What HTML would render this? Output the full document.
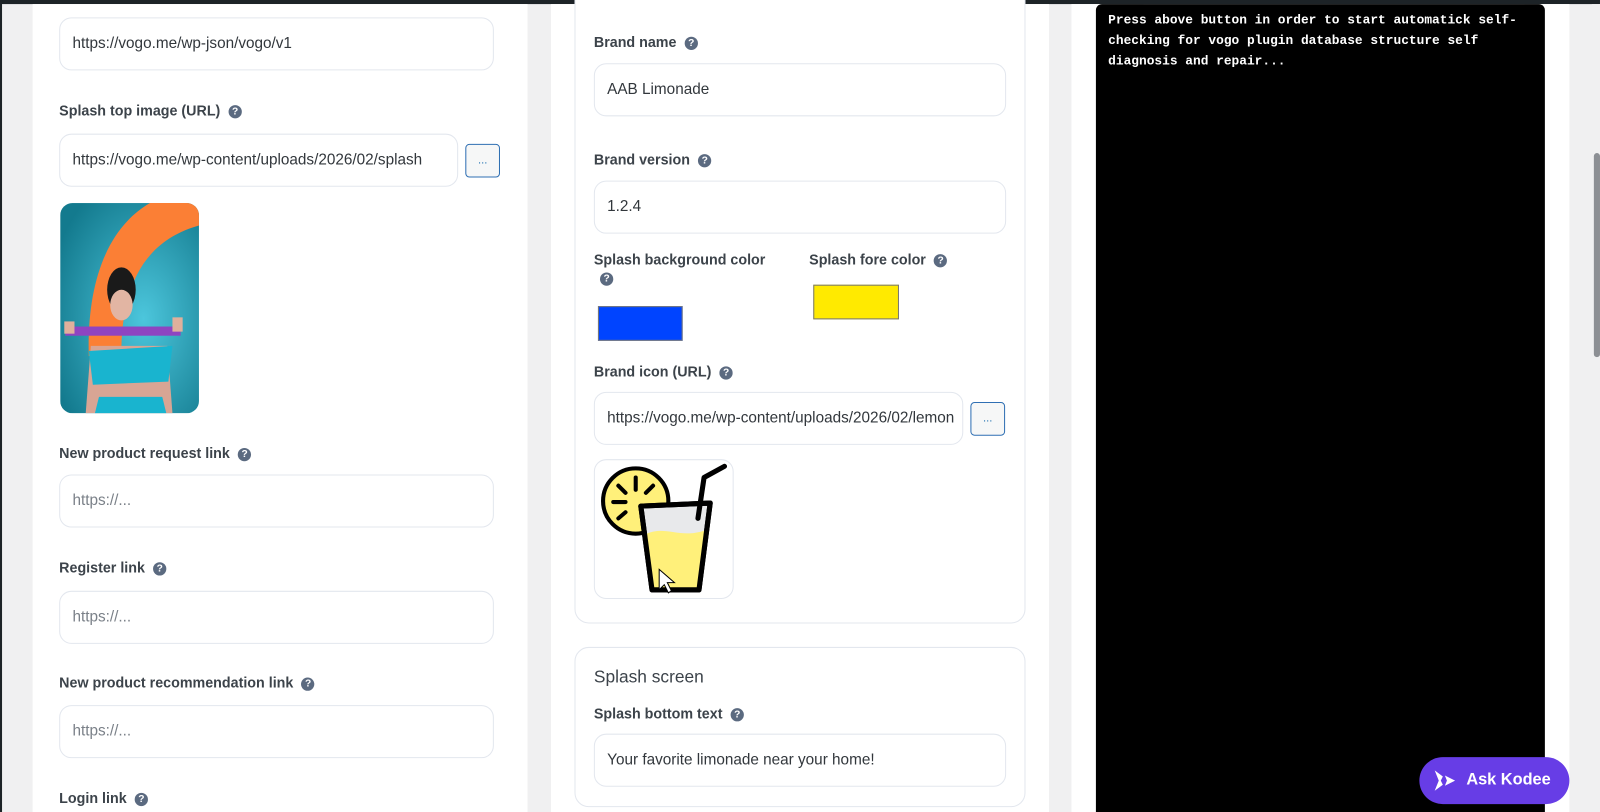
<!DOCTYPE html>
<html><head><meta charset="utf-8"><style>
*{box-sizing:border-box;margin:0;padding:0}
body{width:1600px;height:812px;overflow:hidden;background:#f0f0f1;font-family:"Liberation Sans",sans-serif;position:relative;color:#32373c}
#w{position:absolute;left:0;top:0;width:1568px;height:796px;transform:scale(1.0204);transform-origin:0 0}
.abs{position:absolute}
.lbl{position:absolute;font-size:14px;font-weight:bold;color:#3c434a;white-space:nowrap}
.q{display:inline-block;width:13px;height:13px;border-radius:50%;background:#5b6a80;color:#fff;font-size:10px;line-height:13px;text-align:center;font-weight:bold;margin-left:8px;vertical-align:1px}
.inp{position:absolute;height:52px;border:1px solid #e3e7ee;border-radius:12px;background:#fff;font-size:15px;color:#32373c;padding:0 12px;line-height:50px;white-space:nowrap;overflow:hidden}
.ph{color:#7a8088}
.btn{position:absolute;width:34px;height:33px;border:1px solid #2f6fb3;border-radius:4px;background:#f6f7f7;color:#2271b1;font-size:11px;text-align:center;line-height:30px}
.card{position:absolute;border:1px solid #e3e7ee;border-radius:14px;background:#fff}
</style></head><body><div id="w">
<div class="abs" style="left:0;top:0;width:1568px;height:4px;background:#1d2327"></div>
<div class="abs" style="left:0;top:0;width:2px;height:796px;background:#1d2327"></div>
<div class="abs" style="left:32px;top:4px;width:485px;height:792px;background:#fff"></div>
<div class="abs" style="left:540px;top:4px;width:488px;height:792px;background:#fff"></div>
<div class="abs" style="left:1050px;top:4px;width:488px;height:792px;background:#fff"></div>
<div class="abs" style="left:1560px;top:4px;width:8px;height:792px;background:#f0f0f1"></div>
<div class="abs" style="left:1562px;top:150px;width:6px;height:200px;background:#8c8f94;border-radius:3px"></div>

<!-- left column -->
<div class="inp" style="left:58px;top:17px;width:426px">https://vogo.me/wp-json/vogo/v1</div>
<div class="lbl" style="left:58px;top:100px">Splash top image (URL)<span class="q">?</span></div>
<div class="inp" style="left:58px;top:131px;width:391px">https://vogo.me/wp-content/uploads/2026/02/splash</div>
<div class="btn" style="left:456px;top:141px">...</div>
<svg class="abs" style="left:59px;top:199px" width="136" height="206" viewBox="0 0 136 206">
<defs><clipPath id="c"><rect width="136" height="206" rx="12"/></clipPath>
<radialGradient id="g" cx="0.6" cy="0.55" r="0.7"><stop offset="0" stop-color="#4cc6dc"/><stop offset="1" stop-color="#137a8e"/></radialGradient></defs>
<g clip-path="url(#c)"><rect width="136" height="206" fill="url(#g)"/>
<path d="M88 0 L136 0 L136 22 C90 35 62 70 60 140 L28 150 C26 80 45 25 88 0Z" fill="#fb7f35"/>
<ellipse cx="60" cy="85" rx="14" ry="22" fill="#1a1a1a"/>
<ellipse cx="60" cy="100" rx="11" ry="15" fill="#e2b5a3"/>
<path d="M30 140 L105 140 L110 206 L25 206Z" fill="#d8a594"/>
<path d="M28 145 L110 140 L106 175 L32 178Z" fill="#19b4cf"/>
<path d="M38 190 L100 190 L104 206 L34 206Z" fill="#19b4cf"/>
<rect x="5" y="121" width="113" height="9" fill="#8e44c1"/>
<rect x="4" y="116" width="10" height="12" fill="#e0b09c"/><rect x="110" y="112" width="10" height="14" fill="#e0b09c"/>
</g></svg>
<div class="lbl" style="left:58px;top:436px">New product request link<span class="q">?</span></div>
<div class="inp ph" style="left:58px;top:465px;width:426px">https://...</div>
<div class="lbl" style="left:58px;top:548px">Register link<span class="q">?</span></div>
<div class="inp ph" style="left:58px;top:579px;width:426px">https://...</div>
<div class="lbl" style="left:58px;top:661px">New product recommendation link<span class="q">?</span></div>
<div class="inp ph" style="left:58px;top:691px;width:426px">https://...</div>
<div class="lbl" style="left:58px;top:774px">Login link<span class="q">?</span></div>

<!-- middle column -->
<div class="card" style="left:563px;top:-20px;width:442px;height:631px"></div>
<div class="lbl" style="left:582px;top:33px">Brand name<span class="q">?</span></div>
<div class="inp" style="left:582px;top:62px;width:404px">AAB Limonade</div>
<div class="lbl" style="left:582px;top:148px">Brand version<span class="q">?</span></div>
<div class="inp" style="left:582px;top:177px;width:404px">1.2.4</div>
<div class="lbl" style="left:582px;top:246px">Splash background color</div>
<span class="q abs" style="left:580px;top:267px">?</span>
<div class="abs" style="left:586px;top:300px;width:83px;height:34px;background:#0044ff;border:1px solid #777"></div>
<div class="lbl" style="left:793px;top:246px">Splash fore color<span class="q">?</span></div>
<div class="abs" style="left:797px;top:279px;width:84px;height:34px;background:#ffea00;border:1px solid #777"></div>
<div class="lbl" style="left:582px;top:356px">Brand icon (URL)<span class="q">?</span></div>
<div class="inp" style="left:582px;top:384px;width:362px">https://vogo.me/wp-content/uploads/2026/02/lemon</div>
<div class="btn" style="left:951px;top:394px">...</div>
<div class="card" style="left:582px;top:450px;width:137px;height:137px;border-radius:12px"></div>
<svg class="abs" style="left:582px;top:450px" width="137" height="137" viewBox="0 0 137 137">
<circle cx="41" cy="41" r="32" fill="#fff07a" stroke="#000" stroke-width="4"/>
<g stroke="#000" stroke-width="4" stroke-linecap="round"><path d="M41 18v12M24 26l7 7M19 42h12M24 58l7-6M58 26l-7 7"/></g>
<path d="M46 46 L114 43 L103 128 L57 128 Z" fill="#e8e9eb" stroke="#000" stroke-width="5" stroke-linejoin="round"/>
<path d="M52 73 C70 65 85 78 108 70 L103 128 L57 128Z" fill="#fff07a"/>
<path d="M46 46 L114 43 L103 128 L57 128 Z" fill="none" stroke="#000" stroke-width="5" stroke-linejoin="round"/>
<path d="M102 58 L108 18 L128 7" fill="none" stroke="#000" stroke-width="5" stroke-linecap="round" stroke-linejoin="round"/>
<path d="M64 108 l0 20 l5-5 l4 8 l3-2 l-4-8 l7 0z" fill="#fff" stroke="#000" stroke-width="1"/>
</svg>
<div class="card" style="left:563px;top:634px;width:442px;height:157px"></div>
<div class="abs" style="left:582px;top:654px;font-size:17px;color:#3c434a">Splash screen</div>
<div class="lbl" style="left:582px;top:691px">Splash bottom text<span class="q">?</span></div>
<div class="inp" style="left:582px;top:719px;width:404px">Your favorite limonade near your home!</div>

<!-- right -->
<div class="abs" style="left:1074px;top:4px;width:440px;height:792px;background:#000;border-radius:6px 6px 0 0"></div>
<div class="abs" style="left:1086px;top:10px;width:420px;font-family:'Liberation Mono',monospace;font-size:12.6px;font-weight:bold;line-height:20px;color:#fff">Press above button in order to start automatick self-checking for vogo plugin database structure self diagnosis and repair...</div>
<div class="abs" style="left:1391px;top:742px;width:147px;height:46px;border-radius:23px;background:#673de6;color:#fff;font-weight:bold;font-size:16px;line-height:46px;padding-left:46px">Ask Kodee</div>
<svg class="abs" style="left:1404px;top:753px" width="24" height="24" viewBox="0 0 24 24" fill="#fff"><path d="M2 2l8 6-2 4 2 4-8 6 4-10z"/><path d="M12 7l10 5-10 5 2-5z"/></svg>
</div></body></html>
